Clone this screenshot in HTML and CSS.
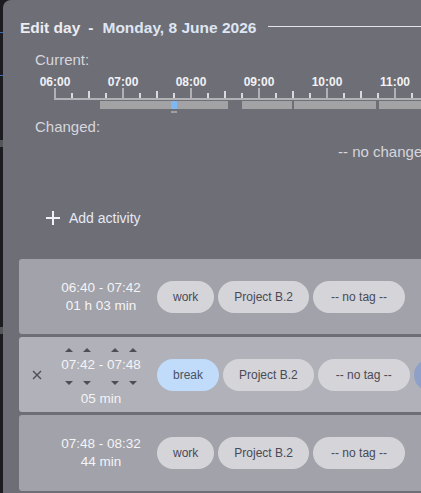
FILE: index.html
```html
<!DOCTYPE html>
<html lang="en">
<head>
    <meta charset="UTF-8">
    <meta name="viewport" content="width=device-width, initial-scale=1.0">
    <title>Edit day</title>
    <link rel="stylesheet" href="styles.css">
</head>
<body>
    <div class="edge">
        <div class="edge-box"></div>
        <div class="edge-block"></div>
        <div class="edge-block edge-block-low"></div>
    </div>

    <div class="dialog">
        <header class="dialog-head">
            <h1><span class="head-label">Edit day</span><span class="head-sep">-</span><span class="head-date">Monday, 8 June 2026</span></h1>
            <div class="head-rule"></div>
        </header>

        <section class="overview">
            <div class="overview-label">Current:</div>
            <div class="timeline">
                <div class="timeline-hours">
                    <span>06:00</span>
                    <span>07:00</span>
                    <span>08:00</span>
                    <span>09:00</span>
                    <span>10:00</span>
                    <span>11:00</span>
                </div>
                <div class="timeline-ticks"></div>
                <div class="timeline-bars">
                    <!-- 68px per hour, 0 = 06:00 -->
                    <div class="bar" style="left:45px;width:128px"></div>
                    <div class="bar" style="left:187px;width:50px"></div>
                    <div class="bar" style="left:239px;width:82px"></div>
                    <div class="bar" style="left:324px;width:200px"></div>
                    <div class="bar bar-active" style="left:116px;width:6px"></div>
                    <div class="bar-cursor" style="left:116px"></div>
                </div>
            </div>
            <div class="overview-label">Changed:</div>
            <div class="no-changes">-- no changes --</div>
        </section>

        <button class="add-activity">
            <svg width="16" height="16" viewBox="0 0 16 16">
                <path d="M8 1v14M1 8h14" stroke="#eef0fa" stroke-width="2" fill="none"/>
            </svg>
            Add activity
        </button>

        <div class="activities">
            <div class="activity">
                <div class="activity-remove"></div>
                <div class="activity-time">
                    <div>06:40 - 07:42</div>
                    <div>01 h 03 min</div>
                </div>
                <div class="chips">
                    <span class="chip">work</span>
                    <span class="chip">Project B.2</span>
                    <span class="chip chip-tag">-- no tag --</span>
                </div>
            </div>

            <div class="activity activity-selected">
                <div class="activity-remove">
                    <svg width="10" height="10" viewBox="0 0 10 10">
                        <path d="M1 1l8 8M9 1l-8 8" stroke="#4d4d5a" stroke-width="1.4" fill="none"/>
                    </svg>
                </div>
                <div class="activity-time time-edit">
                    <div class="time-range">
                        <div class="time-part"><span class="spin-up"></span><span class="time-digits">07</span><span class="spin-down"></span></div>
                        <span class="time-sep">:</span>
                        <div class="time-part"><span class="spin-up"></span><span class="time-digits">42</span><span class="spin-down"></span></div>
                        <span class="time-sep"> - </span>
                        <div class="time-part"><span class="spin-up"></span><span class="time-digits">07</span><span class="spin-down"></span></div>
                        <span class="time-sep">:</span>
                        <div class="time-part"><span class="spin-up"></span><span class="time-digits">48</span><span class="spin-down"></span></div>
                    </div>
                    <div class="time-duration">05 min</div>
                </div>
                <div class="chips">
                    <span class="chip chip-break">break</span>
                    <span class="chip">Project B.2</span>
                    <span class="chip chip-tag">-- no tag --</span>
                    <span class="chip-round"></span>
                </div>
            </div>

            <div class="activity activity-last">
                <div class="activity-remove"></div>
                <div class="activity-time">
                    <div>07:48 - 08:32</div>
                    <div>44 min</div>
                </div>
                <div class="chips">
                    <span class="chip">work</span>
                    <span class="chip">Project B.2</span>
                    <span class="chip chip-tag">-- no tag --</span>
                </div>
            </div>
        </div>
    </div>
</body>
</html>
```

FILE: styles.css
```css
* {
    margin: 0;
    padding: 0;
    box-sizing: border-box;
}
body {
    font-family: 'Liberation Sans', Arial, sans-serif;
    background-color: #1c1c20;
    color: #eeeef2;
    display: flex;
    overflow: hidden;
    height: 493px;
}
.edge {
    width: 3px;
    flex: none;
}
.edge-box {
    margin-top: 32px;
    height: 44px;
    border-top: 1px solid #3d6fae;
    border-bottom: 1px solid #3d6fae;
}
.edge-block {
    margin-top: 64px;
    height: 7px;
    background: #55555c;
}
.edge-block-low {
    margin-top: 180px;
}
.dialog {
    flex: none;
    width: 720px;
    background-color: #6e6e77;
    border-top-left-radius: 8px;
}
.dialog-head {
    display: flex;
    align-items: center;
    padding: 18px 0 0 17px;
}
.dialog-head h1 {
    font-size: 15.5px;
    font-weight: bold;
    line-height: 20px;
    white-space: nowrap;
}
.head-label {
    color: #ececf0;
}
.head-sep {
    color: #ececf0;
    margin: 0 9px 0 8px;
}
.head-date {
    color: #dfe6f3;
}
.head-rule {
    flex: 1;
    height: 1px;
    margin: 0 0 4px 12px;
    background: #e4e4e8;
}
.overview {
    padding-left: 32px;
}
.overview-label {
    margin-top: 12px;
    font-size: 15px;
    line-height: 20px;
    color: #d6d6dc;
}
.timeline {
    margin-left: 20px;
}
.timeline-hours {
    display: flex;
    margin: 6px 0 0 -34px;
}
.timeline-hours span {
    flex: none;
    width: 68px;
    text-align: center;
    font-size: 12px;
    font-weight: bold;
    line-height: 12px;
    color: #f2f2f4;
}
.timeline-ticks {
    margin-left: -1px;
    width: 600px;
    height: 12px;
    background:
        linear-gradient(#b2b2b6, #b2b2b6) 0 100% / 100% 2px no-repeat,
        repeating-linear-gradient(90deg, #b2b2b6 0 2px, transparent 2px 68px) 0 0 / 100% 10px no-repeat,
        repeating-linear-gradient(90deg, #dadade 0 2px, transparent 2px 34px) 34px 3px / 100% 7px no-repeat,
        repeating-linear-gradient(90deg, #dadade 0 2px, transparent 2px 17px) 17px 5px / 100% 5px no-repeat;
}
.timeline-bars {
    position: relative;
    height: 14px;
    margin-top: 1px;
}
.bar {
    position: absolute;
    top: 0;
    height: 8px;
    background: #a3a3a5;
}
.bar-active {
    background: #7fb7f3;
}
.bar-cursor {
    position: absolute;
    top: 10px;
    width: 6px;
    height: 2px;
    background: #a0a0a4;
}
.timeline + .overview-label {
    margin-top: 2px;
}
.no-changes {
    margin-top: 5px;
    padding-left: 303px;
    font-size: 15px;
    line-height: 20px;
    color: #d6d6dc;
    white-space: nowrap;
}
.add-activity {
    display: flex;
    align-items: center;
    gap: 8px;
    margin: 46px 0 0 42px;
    background: none;
    border: none;
    font-family: inherit;
    font-size: 14px;
    line-height: 20px;
    color: #e6e9f5;
}
.activities {
    margin: 31px 0 0 16px;
}
.activity {
    display: flex;
    align-items: center;
    height: 75px;
    margin-bottom: 3px;
    background: #a1a2aa;
    border-radius: 3px;
}
.activity-selected {
    background: #b0b1b9;
}
.activity-last {
    height: 76px;
}
.activity-remove {
    flex: none;
    width: 36px;
    display: flex;
    justify-content: center;
}
.activity-time {
    flex: none;
    width: 92px;
    text-align: center;
    font-size: 13.5px;
    line-height: 18px;
    color: #f4f4f6;
}
.time-edit {
    padding-top: 7px;
}
.time-range {
    display: flex;
    justify-content: center;
    align-items: flex-start;
}
.time-part {
    display: flex;
    flex-direction: column;
    align-items: center;
}
.time-sep {
    padding-top: 8px;
    white-space: pre;
}
.spin-up,
.spin-down {
    width: 0;
    height: 0;
    border-left: 4px solid transparent;
    border-right: 4px solid transparent;
}
.spin-up {
    border-bottom: 4px solid #4e4e56;
    margin-bottom: 4px;
}
.spin-down {
    border-top: 4px solid #4e4e56;
    margin-top: 7px;
}
.time-duration {
    margin-top: 5px;
}
.chips {
    display: flex;
    align-items: center;
    gap: 4px;
    margin-left: 10px;
}
.chip {
    height: 32px;
    line-height: 32px;
    padding: 0 16px;
    border-radius: 16px;
    background: #d4d4d9;
    color: #4a4a56;
    font-size: 12px;
    white-space: nowrap;
}
.chip-tag {
    padding: 0 18px;
}
.chip-break {
    background: #c0dcfa;
    color: #4a5264;
}
.chip-round {
    width: 32px;
    height: 32px;
    border-radius: 50%;
    background: #8fa0c8;
}
```
